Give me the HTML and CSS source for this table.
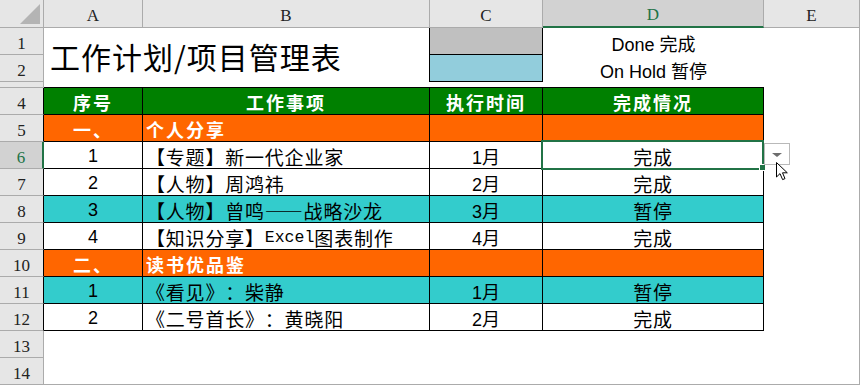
FILE: index.html
```html
<!DOCTYPE html>
<html lang="zh">
<head>
<meta charset="utf-8">
<title>工作计划/项目管理表</title>
<link rel="stylesheet" href="styles.css">
</head>
<body>
<div class="sheet">
  <!-- column headers -->
  <div class="corner"><svg class="tri" width="20" height="20" viewBox="0 0 20 20"><polygon points="20,0 20,20 0,20" fill="#b4b4b4"/></svg></div>
  <div class="ch">A</div>
  <div class="ch">B</div>
  <div class="ch">C</div>
  <div class="ch ch-sel">D</div>
  <div class="ch ch-e">E</div>

  <!-- row 1 -->
  <div class="rh">1</div>
  <div class="title">工作计划/项目管理表</div>
  <div class="legend lg-gray"></div>
  <div class="note">Done 完成</div>
  <div class="ecell"></div>

  <!-- row 2 -->
  <div class="rh">2</div>
  <div class="legend lg-blue"></div>
  <div class="note">On Hold 暂停</div>
  <div class="ecell"></div>

  <!-- row 3 (hidden-ish) -->
  <div class="rh rh3"></div>
  <div class="topline"></div>
  <div class="topline"></div>
  <div class="topline"></div>
  <div class="topline"></div>
  <div class="ecell"></div>

  <!-- row 4 -->
  <div class="rh rh-t">4</div>
  <div class="t hd ctr">序号</div>
  <div class="t hd ctr">工作事项</div>
  <div class="t hd ctr">执行时间</div>
  <div class="t hd ctr">完成情况</div>
  <div class="ecell"></div>

  <!-- row 5 -->
  <div class="rh rh-t">5</div>
  <div class="t or ctr">一、</div>
  <div class="t or lft">个人分享</div>
  <div class="t or"></div>
  <div class="t or"></div>
  <div class="ecell"></div>

  <!-- row 6 -->
  <div class="rh rh-sel">6</div>
  <div class="t ctr num">1</div>
  <div class="t lft">【专题】新一代企业家</div>
  <div class="t ctr num">1月</div>
  <div class="t ctr">完成</div>
  <div class="ecell"></div>

  <!-- row 7 -->
  <div class="rh rh-t">7</div>
  <div class="t ctr num">2</div>
  <div class="t lft">【人物】周鸿祎</div>
  <div class="t ctr num">2月</div>
  <div class="t ctr">完成</div>
  <div class="ecell"></div>

  <!-- row 8 -->
  <div class="rh rh-t">8</div>
  <div class="t tq ctr num">3</div>
  <div class="t tq lft">【人物】曾鸣——战略沙龙</div>
  <div class="t tq ctr num">3月</div>
  <div class="t tq ctr">暂停</div>
  <div class="ecell"></div>

  <!-- row 9 -->
  <div class="rh rh-t">9</div>
  <div class="t ctr num">4</div>
  <div class="t lft">【知识分享】<span class="mono">Excel</span>图表制作</div>
  <div class="t ctr num">4月</div>
  <div class="t ctr">完成</div>
  <div class="ecell"></div>

  <!-- row 10 -->
  <div class="rh rh-t">10</div>
  <div class="t or ctr">二、</div>
  <div class="t or lft">读书优品鉴</div>
  <div class="t or"></div>
  <div class="t or"></div>
  <div class="ecell"></div>

  <!-- row 11 -->
  <div class="rh rh-t">11</div>
  <div class="t tq ctr num">1</div>
  <div class="t tq lft">《看见》：柴静</div>
  <div class="t tq ctr num">1月</div>
  <div class="t tq ctr">暂停</div>
  <div class="ecell"></div>

  <!-- row 12 -->
  <div class="rh rh-t">12</div>
  <div class="t ctr num">2</div>
  <div class="t lft">《二号首长》：黄晓阳</div>
  <div class="t ctr num">2月</div>
  <div class="t ctr">完成</div>
  <div class="ecell"></div>

  <!-- row 13 -->
  <div class="rh">13</div>
  <div></div><div></div><div></div><div></div>
  <div class="ecell"></div>

  <!-- row 14 -->
  <div class="rh last">14</div>
  <div class="last"></div><div class="last"></div><div class="last"></div><div class="last"></div>
  <div class="ecell last"></div>

  <!-- overlays -->
  <div class="selbox"></div>
  <div class="handle"></div>
  <div class="dropdown"><span class="dd-arrow"></span></div>
  <svg class="cursor" width="13" height="19" viewBox="0 0 13 19">
    <path d="M0.5 0.5 V15 L4 11.6 L6.6 17.6 L9 16.6 L6.5 10.8 H11.3 Z" fill="#fff" stroke="#000" stroke-width="1" stroke-linejoin="round"/>
  </svg>
</div>
</body>
</html>
```

FILE: styles.css
```css
body {
  margin: 0;
  background: #fff;
  overflow: hidden;
}

.sheet {
  position: relative;
  display: grid;
  grid-template-columns: 44px 99px 287px 113px 221px 96px;
  grid-template-rows: 28px 27px 27px 6px repeat(11, 27px);
  width: 860px;
  height: 385px;
  font-family: "Noto Sans CJK SC", sans-serif;
  font-size: 19px;
  color: #000;
  text-spacing-trim: space-all;
}

.sheet > div {
  box-sizing: border-box;
  display: flex;
  align-items: center;
  min-width: 0;
  overflow: hidden;
  white-space: nowrap;
}

/* headers */
.corner {
  background: #e6e6e6;
  border-right: 1px solid #ababab;
  border-bottom: 1px solid #ababab;
  position: relative;
}
.tri {
  position: absolute;
  left: 20px;
  top: 4px;
}
.ch {
  background: #e6e6e6;
  border-right: 1px solid #ababab;
  border-bottom: 1px solid #ababab;
  justify-content: center;
  font-family: "Liberation Serif", serif;
  font-size: 17px;
  color: #222;
  padding-top: 4px;
}
.ch-sel {
  background: #d2d2d2;
  color: #217346;
  border-bottom: 2px solid #217346;
}
.rh {
  background: #e6e6e6;
  border-right: 1px solid #ababab;
  border-bottom: 1px solid #ababab;
  justify-content: center;
  font-family: "Liberation Serif", serif;
  font-size: 17px;
  color: #222;
  padding-top: 5px;
}
.rh-t {
  border-right-color: #000;
}
.rh-sel {
  background: #d2d2d2;
  color: #217346;
  border-right: 2px solid #217346;
}
.rh3 {
  padding: 0;
}

.ecell {
  border-right: 1px solid #ababab;
}
.last {
  border-bottom: 1px solid #ababab;
}

/* title area */
.title {
  grid-column: 2 / 4;
  grid-row: 2 / 4;
  border-right: 1px solid #000;
  font-size: 30px;
  letter-spacing: 1px;
  padding-left: 6px;
  padding-top: 2px;
}
.legend {
  border-right: 1px solid #000;
  border-bottom: 1px solid #000;
}
.lg-gray {
  background: #c0c0c0;
}
.lg-blue {
  background: #92cddc;
}
.note {
  justify-content: center;
  font-family: "Liberation Sans", "Noto Sans CJK SC", sans-serif;
  font-size: 18px;
  padding-top: 3px;
}
.topline {
  border-bottom: 1px solid #000;
}

/* table */
.t {
  border-right: 1px solid #000;
  border-bottom: 1px solid #000;
  letter-spacing: 0.8px;
  padding-top: 2px;
}
.ctr {
  justify-content: center;
}
.lft {
  padding-left: 3px;
}
.num {
  font-family: "Liberation Sans", "Noto Sans CJK SC", sans-serif;
  font-size: 18px;
  letter-spacing: 0;
}
.hd {
  background: #008000;
  color: #fff;
  font-weight: 700;
  font-size: 18px;
  letter-spacing: 2px;
}
.or {
  background: #ff6600;
  color: #fff;
  font-weight: 700;
  font-size: 18px;
  letter-spacing: 2px;
}
.tq {
  background: #33cccc;
}
.mono {
  font-family: "Liberation Mono", monospace;
  font-size: 16.5px;
  letter-spacing: 0;
}

/* overlays */
.selbox {
  position: absolute;
  left: 541px;
  top: 140px;
  width: 223px;
  height: 30px;
  border: 2px solid #217346;
}
.handle {
  position: absolute;
  left: 759px;
  top: 164px;
  width: 7px;
  height: 7px;
  background: #217346;
  border: 1px solid #fff;
}
.dropdown {
  position: absolute;
  left: 764px;
  top: 143px;
  width: 26px;
  height: 22px;
  background: #fff;
  border: 1px solid #b9b9b9;
  justify-content: center;
}
.dd-arrow {
  width: 0;
  height: 0;
  border-left: 5px solid transparent;
  border-right: 5px solid transparent;
  border-top: 4px solid #6d6d6d;
  margin-top: 1px;
}
.cursor {
  position: absolute;
  left: 776px;
  top: 162px;
}
```
